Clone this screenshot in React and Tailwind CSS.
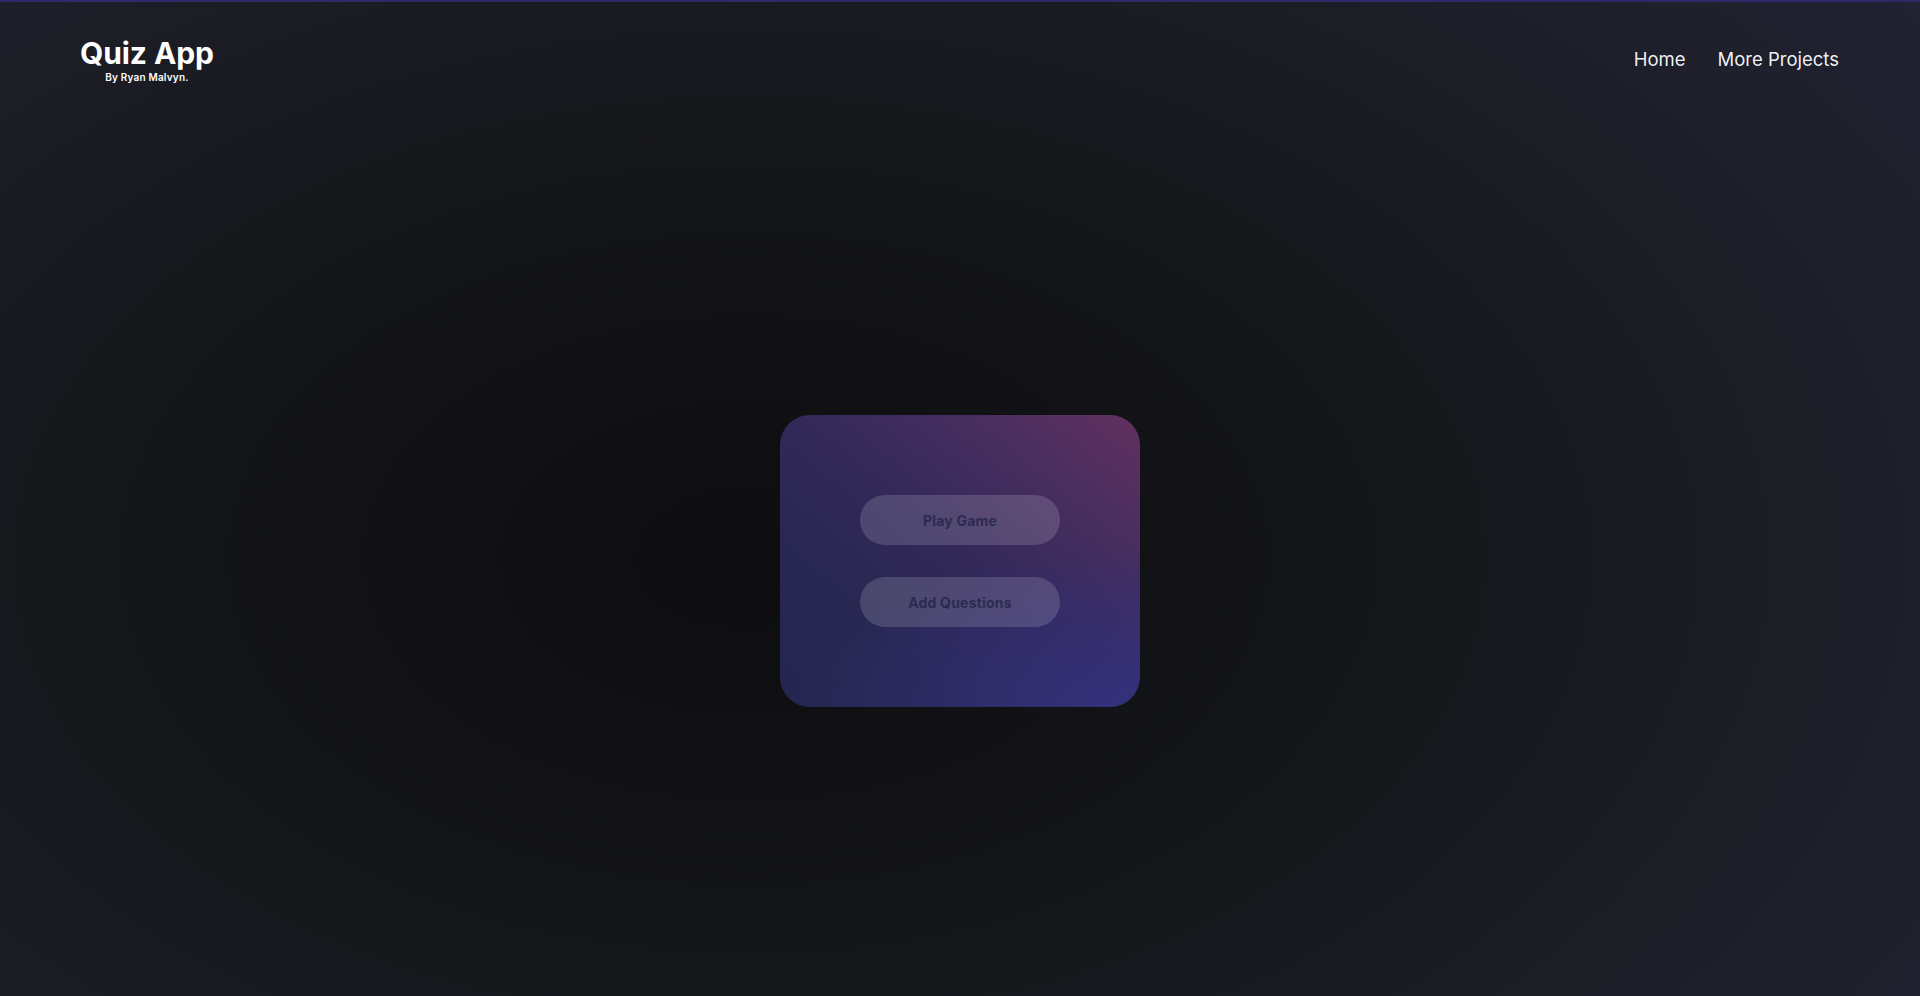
export default function App() {
  return (
    <div
      className="min-h-screen w-full flex flex-col border-t-2 border-[#2d2a6a] text-white bg-[radial-gradient(ellipse_70%_85%_at_39%_56%,#0d0d0f_0%,#131417_38%,#1b1c23_72%,#24263a_130%)]"
      style={{ fontFamily: "Inter, 'Noto Sans', sans-serif" }}
    >
      <header className="h-[118px] px-20 flex items-center justify-between">
        <div className="flex flex-col items-center -mt-[4px]">
          <div className="text-[30px] leading-[36px] font-bold tracking-[-0.1px]">Quiz App</div>
          <div className="text-[10px] leading-[12px] font-semibold tracking-[0.2px]">By Ryan Malvyn.</div>
        </div>
        <nav className="flex items-center gap-8 text-[18.5px] leading-[24px] -mt-[4px] mr-[1px]">
          <a className="text-white/95">Home</a>
          <a className="text-white/95">More Projects</a>
        </nav>
      </header>
      <main className="flex-1 flex items-start justify-center pt-[295px]">
        <div className="w-[360px] h-[292px] rounded-[30px] p-20 flex flex-col gap-8 items-center bg-[radial-gradient(ellipse_95%_55%_at_100%_100%,rgba(52,49,125,1)_0%,rgba(52,49,125,0)_100%),linear-gradient(to_bottom_left,#62305f_0%,#4a2e60_22%,#33295a_48%,#272752_75%,#252650_100%)]">
          <button className="w-[200px] h-[50px] rounded-full bg-white/15 text-[#2c2a52] text-[14px] font-bold tracking-[0.2px]">
            Play Game
          </button>
          <button className="w-[200px] h-[50px] rounded-full bg-white/15 text-[#2c2a52] text-[14px] font-bold tracking-[0.2px]">
            Add Questions
          </button>
        </div>
      </main>
    </div>
  );
}
